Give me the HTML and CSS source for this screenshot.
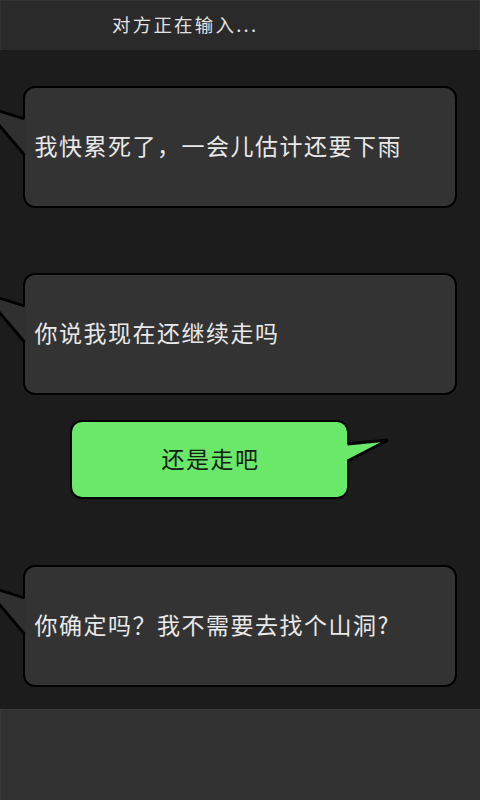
FILE: index.html
```html
<!DOCTYPE html>
<html lang="zh-CN">
<head>
<meta charset="utf-8">
<title>对方正在输入...</title>
<link rel="stylesheet" href="styles.css">
</head>
<body>
<div class="screen">
  <header class="topbar">对方正在输入...</header>
  <main class="chat">
    <div class="bubble in">
      <span class="msg">我快累死了，一会儿估计还要下雨</span>
      <svg class="tail-left" width="28" height="52" viewBox="0 0 28 52">
        <polygon points="0,6 27,14 27,50 0,20" fill="#303030"/>
        <polyline points="0,6 25.5,14" fill="none" stroke="#000" stroke-width="2.8"/>
        <polyline points="0,20 25.5,50" fill="none" stroke="#000" stroke-width="2.8"/>
      </svg>
    </div>
    <div class="bubble in second">
      <span class="msg">你说我现在还继续走吗</span>
      <svg class="tail-left" width="28" height="52" viewBox="0 0 28 52">
        <polygon points="0,6 27,14 27,50 0,20" fill="#303030"/>
        <polyline points="0,6 25.5,14" fill="none" stroke="#000" stroke-width="2.8"/>
        <polyline points="0,20 25.5,50" fill="none" stroke="#000" stroke-width="2.8"/>
      </svg>
    </div>
    <div class="bubble out">
      <span class="msg">还是走吧</span>
      <svg class="tail-right" width="48" height="28" viewBox="0 0 48 28">
        <polygon points="0,7 4,7 44,3 4,24 0,24" fill="#6ae86a"/>
        <polyline points="3.5,7 44,3 3.5,24" fill="none" stroke="#000" stroke-width="2.8" stroke-linejoin="miter"/>
      </svg>
    </div>
    <div class="bubble in third">
      <span class="msg">你确定吗？我不需要去找个山洞?</span>
      <svg class="tail-left" width="28" height="52" viewBox="0 0 28 52">
        <polygon points="0,6 27,14 27,50 0,20" fill="#303030"/>
        <polyline points="0,6 25.5,14" fill="none" stroke="#000" stroke-width="2.8"/>
        <polyline points="0,20 25.5,50" fill="none" stroke="#000" stroke-width="2.8"/>
      </svg>
    </div>
  </main>
  <footer class="inputbar"></footer>
</div>
</body>
</html>
```

FILE: styles.css
```css
html, body {
  margin: 0;
  padding: 0;
  background: #1c1c1c;
}

.screen {
  width: 480px;
  height: 800px;
  display: flex;
  flex-direction: column;
  font-family: "Noto Sans CJK SC", "Noto Sans", sans-serif;
  overflow: hidden;
}

.topbar {
  height: 50px;
  box-sizing: border-box;
  background: #2a2a2a;
  border-top: 1px solid #353535;
  border-right: 1px solid #333333;
  border-left: 1px solid #333333;
  color: #e2e2e2;
  font-size: 18.5px;
  letter-spacing: 2.2px;
  padding-left: 111px;
  display: flex;
  align-items: center;
  padding-bottom: 4px;
}

.chat {
  flex: 1;
  display: flex;
  flex-direction: column;
  padding-top: 36px;
}

.bubble {
  position: relative;
  box-sizing: border-box;
  border: 2.8px solid #000;
  border-radius: 12px;
  display: flex;
  align-items: center;
}

.bubble.in {
  margin-left: 23px;
  width: 434px;
  height: 122px;
  background: #333333;
  padding-left: 9.5px;
  color: #e9e9e9;
}

.bubble.second {
  margin-top: 65px;
}

.bubble.third {
  margin-top: 66px;
}

.bubble.out {
  margin-top: 25px;
  margin-left: 70px;
  width: 279px;
  height: 79px;
  background: #6ae86a;
  justify-content: center;
  color: #142014;
  padding-left: 2px;
}

.msg {
  font-size: 23px;
  letter-spacing: 1.5px;
  line-height: 1;
  padding-bottom: 3px;
}

.tail-left {
  position: absolute;
  left: -25.8px;
  top: 17.2px;
}

.tail-right {
  position: absolute;
  left: 272.2px;
  top: 15.2px;
}

.inputbar {
  height: 91px;
  flex: none;
  box-sizing: border-box;
  background: #313131;
  border-top: 1px solid #383838;
  border-left: 1px solid #383838;
}
```
